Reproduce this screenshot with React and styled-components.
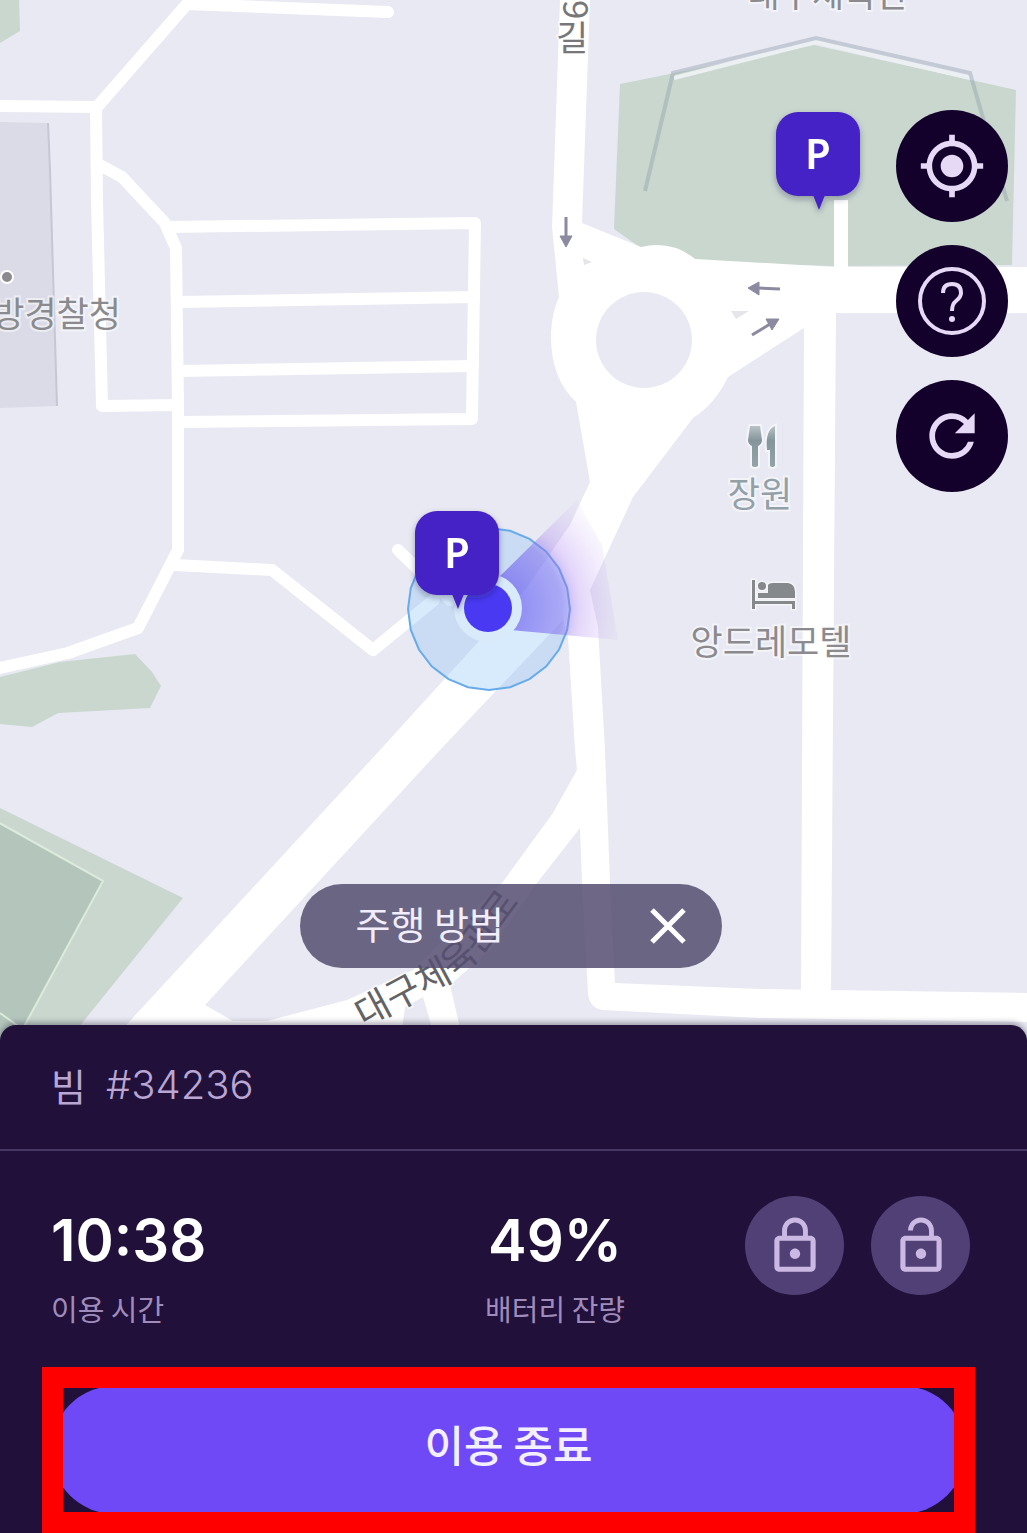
import React, { useState } from 'react';
import styled, { createGlobalStyle } from 'styled-components';
import { MdMyLocation, MdRefresh, MdLockOutline, MdLockOpen } from 'react-icons/md';

const GlobalStyle = createGlobalStyle`
  * {
    box-sizing: border-box;
  }
  body {
    margin: 0;
    background: #20103a;
    font-family: 'Noto Sans CJK KR', sans-serif;
  }
  button {
    border: 0;
    padding: 0;
    font-family: inherit;
    cursor: pointer;
  }
`

// the accuracy ring is drawn with straight segments, like the map sdk does
const ringPoints = (cx, cy, r, sides) => {
  const points = [];
  for (let i = 0; i < sides; i++) {
    const a = (i / sides) * Math.PI * 2;
    points.push(`${(cx + r * Math.cos(a)).toFixed(1)},${(cy + r * Math.sin(a)).toFixed(1)}`);
  }
  return points.join(' ');
}

function ParkingPin({ x, y }) {
  return (
    <g transform={`translate(${x} ${y})`} filter="url(#pinShadow)">
      <rect width="84" height="84" rx="22" fill="#4520c6" />
      <path d="M37 83 L43 98 L49 83Z" fill="#4520c6" />
      <PinText x="42" y="57">P</PinText>
    </g>
  )
}

function MapCanvas() {
  return (
    <Canvas viewBox="0 0 1027 1045" preserveAspectRatio="xMidYMin slice">
      <defs>
        <radialGradient id="cone" gradientUnits="userSpaceOnUse" cx="488" cy="608" r="135">
          <stop offset="0" stopColor="#4a3cf0" stopOpacity="0.65" />
          <stop offset="0.55" stopColor="#7a66ee" stopOpacity="0.5" />
          <stop offset="0.68" stopColor="#b08af0" stopOpacity="0.35" />
          <stop offset="1" stopColor="#d0b8f8" stopOpacity="0.1" />
        </radialGradient>
        <linearGradient id="fork" x1="0" y1="0" x2="0" y2="1">
          <stop offset="0" stopColor="#b9c2c6" />
          <stop offset="0.35" stopColor="#84969c" />
          <stop offset="1" stopColor="#94a3a8" />
        </linearGradient>
        <filter id="pinShadow" x="-20%" y="-20%" width="140%" height="140%">
          <feDropShadow dx="0" dy="3" stdDeviation="3" floodColor="#1c1440" floodOpacity="0.35" />
        </filter>
        <path id="roadName" d="M364 1028 L446 984 Q472 968 486 948 L550 862" />
      </defs>

      <rect width="1027" height="1045" fill="#e8e9f2" />

      {/* parks and buildings */}
      <g fill="#c9d7ce">
        <path d="M0 0H19L20 31L0 43Z" />
        <path d="M620 84L814 45L1016 90L1012 265L833 266L695 262L641 248L614 229Z" />
        <path d="M0 677L60 662L135 654L152 672L161 686L150 708L58 713L32 727L0 724Z" />
        <path d="M0 808L183 898L78 1028V1045H0Z" />
      </g>
      <path d="M-4 821L103 881L14 1045H-4Z" fill="#b4c6bc" stroke="#dcebdc" strokeWidth="2" />
      <path d="M0 1013L18 1026" stroke="#dcebdc" strokeWidth="2" />
      <path d="M0 122L48 123L57 406L0 408Z" fill="#dadbe6" />
      <path d="M48 123L50 170L57 406" fill="none" stroke="#c6c7d3" strokeWidth="2" />
      <path d="M674 78L816 42L970 78" fill="none" stroke="#edf0f3" strokeWidth="4" />
      <path d="M645 191L673 73L816 38L970 73L1007 201" fill="none" stroke="#8e9cab" strokeOpacity="0.4" strokeWidth="4" />

      {/* narrow streets */}
      <g fill="none" stroke="#fff" strokeWidth="12" strokeLinecap="round" strokeLinejoin="round">
        <path d="M-10 106L97 107L187 4L388 12" />
        <path d="M96 107L97 200L102 406L178 405" />
        <path d="M98 164L122 177L165 223L176 248L178 405L178 550L138 628L68 653L-10 670" />
        <path d="M168 227L475 223L472 419L178 422" />
        <path d="M178 302L474 297M178 371L473 366" />
        <path d="M175 565L272 570L373 650L434 600M398 550L450 600" />
      </g>

      {/* main roads and the roundabout */}
      <g fill="#fff">
        <path d="M560 0H590L582 223L641 247Q672 240 695 259L834 267V200H848V267H1027V313H836L831 993H801L804 328L728 377Q715 404 693 418L633 497L590 590L598 627L605 750L610 883L615 983L760 989L1027 993V1022L760 1018L602 1010Q590 1008 588 994L582 883L580 828L537 883L490 950L450 985L464 1045H437L423 997L405 1007L400 1045H109L128 1023L380 750L480 640L525 590L570 525L590 482L576 402Q550 378 551 333Q552 312 559 297L552 227Z" />
      </g>
      <g fill="#e8e9f2">
        <path d="M563 620L568 637L575 750L577 770L553 813L502 883L413 970L347 1000L267 1021L233 1021L205 1005L440 750Z" />
        <circle cx="644" cy="340" r="48" />
      </g>
      <path d="M583 258L592 262L584 265ZM731 311L749 311L736 319Z" fill="#e6e6ea" />

      <g fill="#8b8aa0" stroke="#8b8aa0" strokeWidth="3">
        <path d="M566 217V238" />
        <path d="M560 236H572L566 247Z" strokeWidth="1" />
        <path d="M780 289L758 288" />
        <path d="M759 282V295L748 288Z" strokeWidth="1" />
        <path d="M752 335L770 324" />
        <path d="M766 319L779 319L772 330Z" strokeWidth="1" />
      </g>

      {/* place labels */}
      <circle cx="7" cy="277" r="6" fill="#8b8b8f" stroke="#fff" strokeWidth="2" />
      <PlaceText x="121" y="327" $anchor="end">방경찰청</PlaceText>
      <PlaceText x="828" y="7">대구체육관</PlaceText>
      <PlaceText x="572" y="51" $color="#77777a">길</PlaceText>
      <PlaceText transform="translate(563 0) rotate(90)" $color="#77777a" $anchor="start">9</PlaceText>
      <PlaceText x="760" y="507" $color="#93a0a8">장원</PlaceText>
      <PlaceText x="771" y="655">앙드레모텔</PlaceText>
      <PlaceText $color="#636366" $anchor="start" $size={37}>
        <textPath href="#roadName">대구체육관로</textPath>
      </PlaceText>

      <g fill="url(#fork)" stroke="#f4f5f9" strokeWidth="4" paintOrder="stroke">
        <path d="M750 426H760L762 440Q762 444 758 446V466Q755 468 752 466V446Q748 444 748 440Z" />
        <path d="M775 426V466Q772 468 770 466V450H767Q765 430 775 426Z" />
      </g>
      <g fill="#85898c" stroke="#f4f5f9" strokeWidth="3" paintOrder="stroke">
        <path d="M752 580H755V601H795V609H792V604H755V609H752Z" />
        <circle cx="762" cy="586" r="4" />
        <path d="M758 593H768V585Q769 583 773 583H788Q795 584 795 592V598H758Z" />
      </g>

      {/* current position */}
      <polygon points={ringPoints(489, 609, 81, 24)} fill="#8fc5f6" fillOpacity="0.35" stroke="#68abea" strokeWidth="2" />
      <path d="M488 588L577 500L602 545L618 640L488 628Z" fill="url(#cone)" />
      <circle cx="488" cy="608" r="34" fill="#d9eafb" />
      <circle cx="488" cy="608" r="24" fill="#4a39f3" />
      <ParkingPin x={415} y={511} />
      <ParkingPin x={776} y={112} />
    </Canvas>
  )
}

function HelpIcon() {
  return (
    <svg width="68" height="68" viewBox="0 0 68 68" fill="none" stroke="currentColor" strokeWidth="4">
      <circle cx="34" cy="34" r="32" />
      <path d="M25 26Q25 17 34 17Q43 17 43 26Q43 30 38 34Q34 37 34 44" />
      <circle cx="34" cy="52" r="3" fill="currentColor" stroke="none" />
    </svg>
  )
}

function CloseIcon() {
  return (
    <svg width="36" height="36" viewBox="0 0 36 36" stroke="currentColor" strokeWidth="5">
      <path d="M2 2L34 34M34 2L2 34" />
    </svg>
  )
}

function App() {
  const [showGuide, setShowGuide] = useState(true);
  const [locked, setLocked] = useState(false);

  return (
    <Screen>
      <GlobalStyle />
      <MapArea>
        <MapCanvas />
        <MapControls>
          <RoundButton aria-label="현재 위치"><MdMyLocation size={68} /></RoundButton>
          <RoundButton aria-label="도움말"><HelpIcon /></RoundButton>
          <RoundButton aria-label="새로고침"><MdRefresh size={68} /></RoundButton>
        </MapControls>
        {showGuide ? (
          <GuidePill>
            <GuideText>주행 방법</GuideText>
            <CloseButton aria-label="닫기" onClick={() => setShowGuide(false)}>
              <CloseIcon />
            </CloseButton>
          </GuidePill>
        ) : null}
      </MapArea>
      <Panel>
        <PanelHeader>
          <span>빔</span>
          <VehicleId>#34236</VehicleId>
        </PanelHeader>
        <Stats>
          <Stat>
            <StatValue>10:38</StatValue>
            <StatLabel>이용 시간</StatLabel>
          </Stat>
          <Stat $center>
            <StatValue>49%</StatValue>
            <StatLabel>배터리 잔량</StatLabel>
          </Stat>
          <LockButtons>
            <LockButton aria-label="잠금" aria-pressed={locked} onClick={() => setLocked(true)}>
              <MdLockOutline size={62} />
            </LockButton>
            <LockButton aria-label="잠금 해제" aria-pressed={!locked} onClick={() => setLocked(false)}>
              <MdLockOpen size={62} />
            </LockButton>
          </LockButtons>
        </Stats>
        <Highlight>
          <EndButton>이용 종료</EndButton>
        </Highlight>
      </Panel>
    </Screen>
  )
}

const Screen = styled.main`
  display: flex;
  flex-direction: column;
  min-height: 100vh;
`

const MapArea = styled.section`
  position: relative;
  flex: 1;
  min-height: 600px;
  overflow: hidden;
`

const Canvas = styled.svg`
  position: absolute;
  inset: 0;
  width: 100%;
  height: 100%;
`

const PlaceText = styled.text`
  font-size: ${props => props.$size || 35}px;
  fill: ${props => props.$color || '#8b8b8f'};
  text-anchor: ${props => props.$anchor || 'middle'};
  paint-order: stroke;
  stroke: #fff;
  stroke-opacity: 0.5;
  stroke-width: 4px;
`

const PinText = styled.text`
  font-family: 'Noto Sans', sans-serif;
  font-size: 42px;
  font-weight: 600;
  fill: #fff;
  text-anchor: middle;
`

const MapControls = styled.div`
  position: absolute;
  top: 110px;
  right: 19px;
  display: flex;
  flex-direction: column;
  gap: 23px;
`

const RoundButton = styled.button`
  display: flex;
  align-items: center;
  justify-content: center;
  width: 112px;
  height: 112px;
  border-radius: 50%;
  background: #13002b;
  color: #e6d9f5;
`

const GuidePill = styled.div`
  position: absolute;
  bottom: 73px;
  left: 51px;
  right: 57px;
  margin: 0 auto;
  display: flex;
  align-items: center;
  justify-content: space-between;
  width: 422px;
  height: 84px;
  padding: 0 36px 0 56px;
  border-radius: 42px;
  background: rgba(85, 78, 113, 0.85);
  color: #f2edfa;
`

const GuideText = styled.span`
  padding-bottom: 8px;
  font-size: 38px;
`

const CloseButton = styled.button`
  display: flex;
  background: none;
  color: #fff;
`

const Panel = styled.section`
  position: relative;
  margin-top: -16px;
  border-radius: 16px 16px 0 0;
  background: #20103a;
  box-shadow: 0 -2px 6px rgba(20, 10, 40, 0.4);
`

const PanelHeader = styled.header`
  display: flex;
  align-items: center;
  gap: 20px;
  height: 126px;
  padding: 0 51px 6px;
  border-bottom: 2px solid #473765;
  color: #b9a6d2;
  font-size: 38px;
`

const VehicleId = styled.span`
  font-family: Inter, sans-serif;
  font-size: 40px;
  font-weight: 300;
`

const Stats = styled.div`
  display: grid;
  grid-template-columns: 1fr auto auto;
  column-gap: 120px;
  height: 216px;
  padding: 45px 57px 0 51px;
`

const Stat = styled.div`
  text-align: ${props => props.$center ? 'center' : 'left'};
`

const StatValue = styled.div`
  color: #fff;
  font-family: Inter, sans-serif;
  font-size: 58px;
  font-weight: 600;
  line-height: 88px;
`

const StatLabel = styled.div`
  color: #a08cba;
  font-size: 29px;
  line-height: 48px;
`

const LockButtons = styled.div`
  display: flex;
  gap: 27px;
`

const LockButton = styled.button`
  display: flex;
  align-items: center;
  justify-content: center;
  width: 99px;
  height: 99px;
  border-radius: 50%;
  background: #504075;
  color: #cbb9e3;
`

const Highlight = styled.div`
  display: flex;
  align-items: center;
  height: 166px;
  margin: 0 52px 0 42px;
  border: 21px solid #f00;
  overflow: hidden;
`

const EndButton = styled.button`
  flex: 1;
  height: 128px;
  margin: 0 -12px;
  padding-bottom: 14px;
  border-radius: 64px;
  background: #6f49f6;
  color: #f4effd;
  font-size: 43px;
  font-weight: 500;
`

export default App
